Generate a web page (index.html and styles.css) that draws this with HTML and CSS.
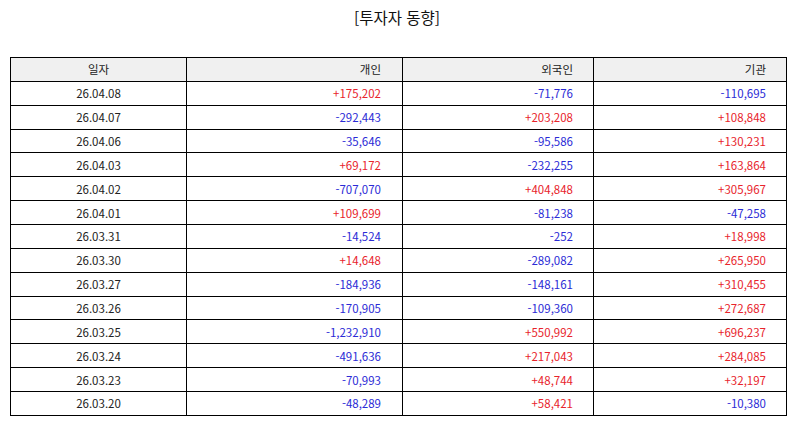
FILE: index.html
```html
<!DOCTYPE html>
<html lang="ko">
<head>
<meta charset="utf-8">
<title>투자자 동향</title>
<link rel="stylesheet" href="styles.css">
</head>
<body>
<h1 class="title">[투자자 동향]</h1>
<table class="flow">
  <colgroup>
    <col class="c-date"><col class="c-ind"><col class="c-for"><col class="c-ins">
  </colgroup>
  <thead>
    <tr><th class="center">일자</th><th>개인</th><th>외국인</th><th>기관</th></tr>
  </thead>
  <tbody>
    <tr><td class="center">26.04.08</td><td class="up">+175,202</td><td class="down">-71,776</td><td class="down">-110,695</td></tr>
    <tr><td class="center">26.04.07</td><td class="down">-292,443</td><td class="up">+203,208</td><td class="up">+108,848</td></tr>
    <tr><td class="center">26.04.06</td><td class="down">-35,646</td><td class="down">-95,586</td><td class="up">+130,231</td></tr>
    <tr><td class="center">26.04.03</td><td class="up">+69,172</td><td class="down">-232,255</td><td class="up">+163,864</td></tr>
    <tr><td class="center">26.04.02</td><td class="down">-707,070</td><td class="up">+404,848</td><td class="up">+305,967</td></tr>
    <tr><td class="center">26.04.01</td><td class="up">+109,699</td><td class="down">-81,238</td><td class="down">-47,258</td></tr>
    <tr><td class="center">26.03.31</td><td class="down">-14,524</td><td class="down">-252</td><td class="up">+18,998</td></tr>
    <tr><td class="center">26.03.30</td><td class="up">+14,648</td><td class="down">-289,082</td><td class="up">+265,950</td></tr>
    <tr><td class="center">26.03.27</td><td class="down">-184,936</td><td class="down">-148,161</td><td class="up">+310,455</td></tr>
    <tr><td class="center">26.03.26</td><td class="down">-170,905</td><td class="down">-109,360</td><td class="up">+272,687</td></tr>
    <tr><td class="center">26.03.25</td><td class="down">-1,232,910</td><td class="up">+550,992</td><td class="up">+696,237</td></tr>
    <tr><td class="center">26.03.24</td><td class="down">-491,636</td><td class="up">+217,043</td><td class="up">+284,085</td></tr>
    <tr><td class="center">26.03.23</td><td class="down">-70,993</td><td class="up">+48,744</td><td class="up">+32,197</td></tr>
    <tr><td class="center">26.03.20</td><td class="down">-48,289</td><td class="up">+58,421</td><td class="down">-10,380</td></tr>
  </tbody>
</table>
</body>
</html>
```
FILE: styles.css
```css
html, body {
  margin: 0;
  padding: 0;
  background: #fff;
}
body {
  font-family: "Noto Sans CJK KR", "Noto Sans", sans-serif;
  color: #222;
}
.title {
  margin: 0;
  padding-top: 5px;
  height: 57px;
  box-sizing: border-box;
  text-align: center;
  font-size: 15.5px;
  font-weight: normal;
  line-height: 24px;
  color: #111;
}
.flow {
  margin-left: 10px;
  border-collapse: collapse;
  table-layout: fixed;
  width: 777px;
  font-size: 11.5px;
}
.flow tr {
  height: 23.87px;
}
.c-date { width: 176px; }
.c-ind { width: 216px; }
.c-for { width: 191px; }
.c-ins { width: 193px; }
.flow th, .flow td {
  border: 1px solid #000;
  padding: 0 21px 0 0;
  text-align: right;
  font-weight: normal;
  line-height: 14px;
  white-space: nowrap;
}
.flow th:nth-child(3), .flow td:nth-child(3),
.flow th:nth-child(4), .flow td:nth-child(4) {
  padding-right: 20px;
}
.flow th {
  background: #f0f0f0;
  color: #222;
}
.flow .center {
  text-align: center;
  padding: 0;
}
.up { color: #e8242c; }
.down { color: #2b2bd6; }
```
